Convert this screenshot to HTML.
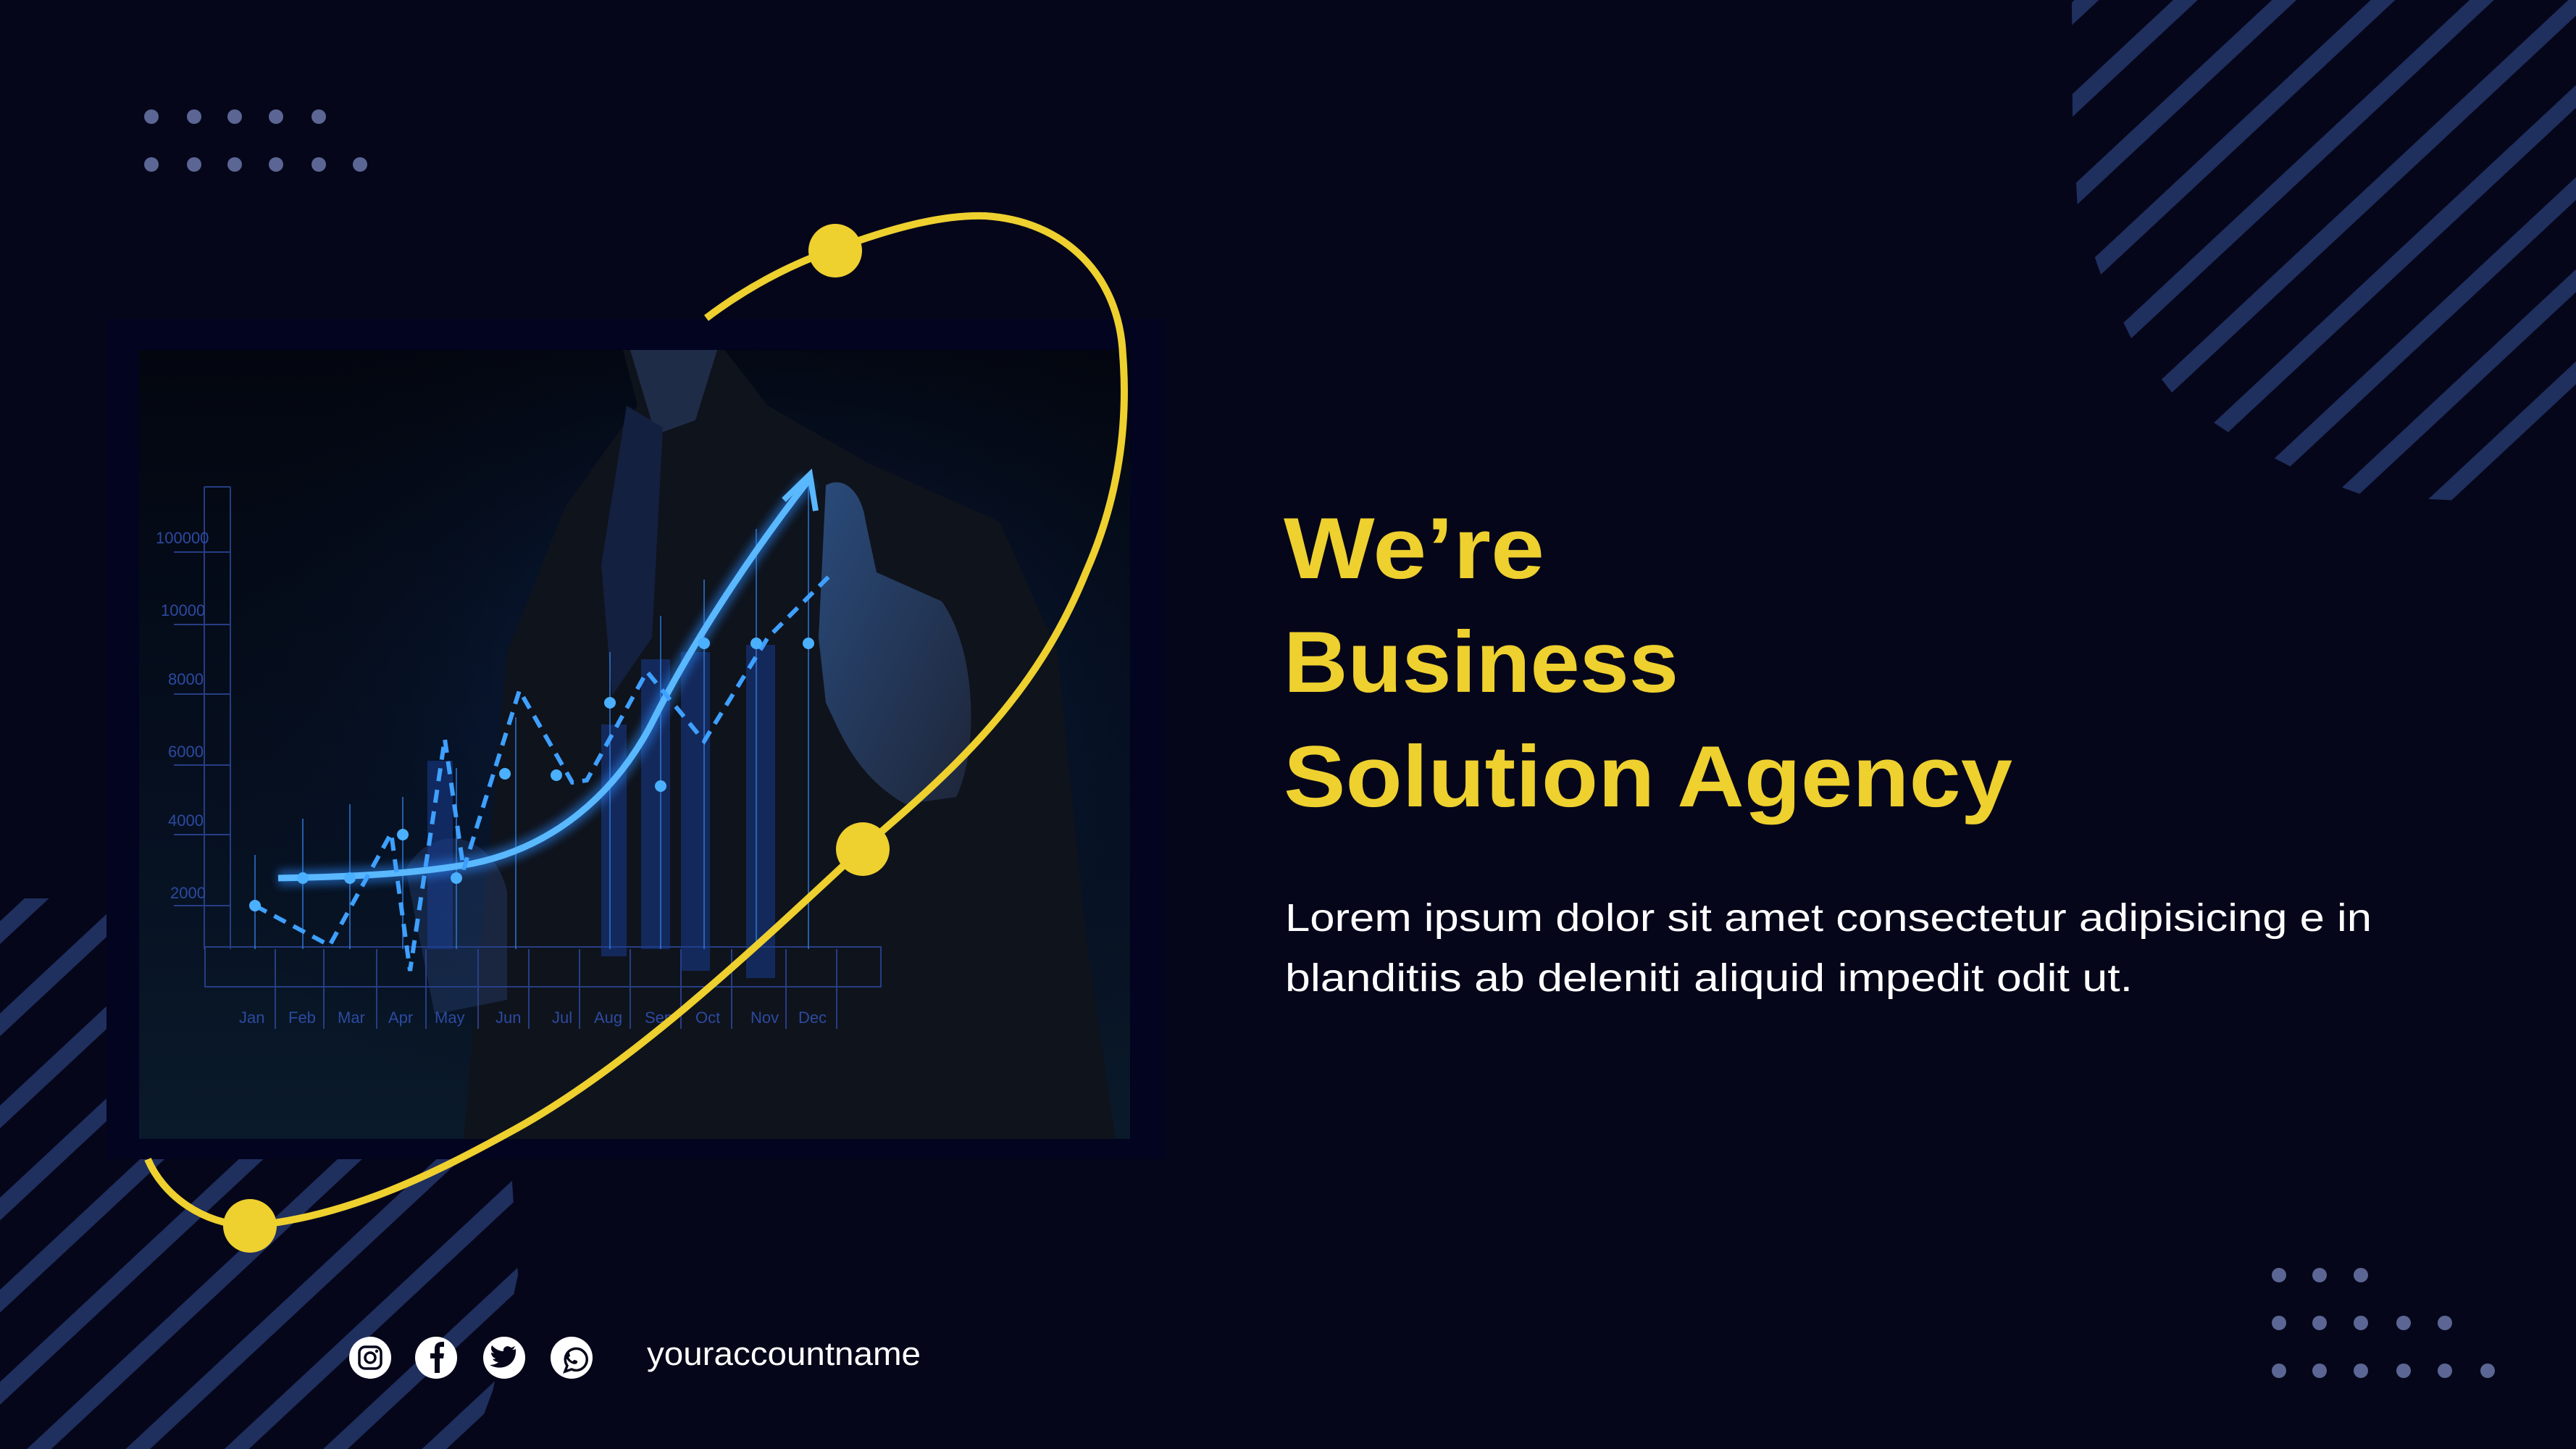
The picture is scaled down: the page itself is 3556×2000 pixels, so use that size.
<!DOCTYPE html>
<html><head><meta charset="utf-8"><style>
html,body{margin:0;padding:0;background:#06061a;}
svg{display:block}
</style></head><body>
<svg width="3556" height="2000" viewBox="0 0 3556 2000" xmlns="http://www.w3.org/2000/svg">
<defs>
<pattern id="st" width="93" height="93" patternUnits="userSpaceOnUse" patternTransform="rotate(47)">
<rect x="0" y="0" width="23" height="93" fill="#1f2f5e"/>
</pattern>
<clipPath id="tr"><polygon points="2860,0 2861,164 2868,288 2904,390 2946,475 3003,548 3093,608 3183,655 3267,685 3420,692 3556,610 3556,0"/></clipPath>
<clipPath id="bl"><polygon points="0,1240 400,1240 705,1600 715,1760 680,1920 650,2000 0,2000"/></clipPath>
<radialGradient id="glow" cx="0.62" cy="0.45" r="0.6">
<stop offset="0" stop-color="#0d2a5a" stop-opacity="0.8"/>
<stop offset="1" stop-color="#050914" stop-opacity="0"/>
</radialGradient>
<linearGradient id="photo" x1="0" y1="0" x2="0" y2="1">
<stop offset="0" stop-color="#03060f"/>
<stop offset="0.6" stop-color="#061021"/>
<stop offset="1" stop-color="#0a1a2a"/>
</linearGradient>
<linearGradient id="hand" x1="0" y1="0" x2="1" y2="1">
<stop offset="0" stop-color="#3f78c8"/>
<stop offset="1" stop-color="#2a3550"/>
</linearGradient>
<filter id="bl1"><feGaussianBlur stdDeviation="6"/></filter>
</defs>
<rect width="3556" height="2000" fill="#06061a"/>
<rect x="2800" y="0" width="756" height="720" fill="url(#st)" clip-path="url(#tr)"/>
<rect x="0" y="1200" width="760" height="800" fill="url(#st)" clip-path="url(#bl)"/>

<g fill="#5b6694">
<circle cx="209" cy="161" r="10"/><circle cx="268" cy="161" r="10"/><circle cx="324" cy="161" r="10"/><circle cx="381" cy="161" r="10"/><circle cx="440" cy="161" r="10"/>
<circle cx="209" cy="227" r="10"/><circle cx="268" cy="227" r="10"/><circle cx="324" cy="227" r="10"/><circle cx="381" cy="227" r="10"/><circle cx="440" cy="227" r="10"/><circle cx="497" cy="227" r="10"/>
<circle cx="3146" cy="1760" r="10"/><circle cx="3202" cy="1760" r="10"/><circle cx="3259" cy="1760" r="10"/>
<circle cx="3146" cy="1826" r="10"/><circle cx="3202" cy="1826" r="10"/><circle cx="3259" cy="1826" r="10"/><circle cx="3318" cy="1826" r="10"/><circle cx="3375" cy="1826" r="10"/>
<circle cx="3146" cy="1892" r="10"/><circle cx="3202" cy="1892" r="10"/><circle cx="3259" cy="1892" r="10"/><circle cx="3318" cy="1892" r="10"/><circle cx="3375" cy="1892" r="10"/><circle cx="3434" cy="1892" r="10"/>
</g>

<rect x="147" y="440" width="1463" height="1160" fill="#020420"/>
<rect x="192" y="483" width="1368" height="1089" fill="url(#photo)"/>
<rect x="192" y="483" width="1368" height="1089" fill="url(#glow)"/>
<path d="M640,1572 L700,900 L780,700 L880,560 L860,483 L1000,483 L1060,560 L1200,640 L1380,720 L1460,900 L1500,1300 L1540,1572 Z" fill="#0f131c"/>
<path d="M870,483 L990,483 L960,580 L905,600 Z" fill="#1f2c48"/>
<path d="M865,560 L915,590 L900,880 L845,960 L830,780 Z" fill="#142040"/>
<path d="M1140,670 C1165,655 1190,680 1195,720 L1210,790 L1300,830 C1350,900 1350,1040 1320,1100 L1250,1110 C1180,1070 1160,1010 1140,970 L1130,880 Z" fill="url(#hand)" opacity="0.55"/>
<path d="M560,1200 C600,1130 680,1150 700,1230 L700,1380 L600,1400 Z" fill="#3d5fa8" opacity="0.25"/>
<g stroke="#2a4390" stroke-width="2" fill="none" opacity="0.9">
<line x1="282" y1="672" x2="282" y2="1310"/><line x1="318" y1="672" x2="318" y2="1310"/><line x1="282" y1="672" x2="318" y2="672"/>
<line x1="240" y1="762" x2="318" y2="762"/><line x1="240" y1="862" x2="318" y2="862"/><line x1="240" y1="958" x2="318" y2="958"/><line x1="240" y1="1056" x2="318" y2="1056"/><line x1="240" y1="1152" x2="318" y2="1152"/><line x1="240" y1="1250" x2="318" y2="1250"/>
<rect x="283" y="1307" width="933" height="55"/>
<line x1="380" y1="1310" x2="380" y2="1420"/><line x1="447" y1="1310" x2="447" y2="1420"/><line x1="520" y1="1310" x2="520" y2="1420"/><line x1="588" y1="1310" x2="588" y2="1420"/><line x1="660" y1="1310" x2="660" y2="1420"/><line x1="730" y1="1310" x2="730" y2="1420"/><line x1="800" y1="1310" x2="800" y2="1420"/><line x1="870" y1="1310" x2="870" y2="1420"/><line x1="940" y1="1310" x2="940" y2="1420"/><line x1="1010" y1="1310" x2="1010" y2="1420"/><line x1="1085" y1="1310" x2="1085" y2="1420"/><line x1="1155" y1="1310" x2="1155" y2="1420"/>
</g>
<g fill="#2c4aa0" font-family="Liberation Sans, sans-serif" font-size="22">
<text x="215" y="750">100000</text><text x="222" y="850">10000</text><text x="232" y="945">8000</text><text x="232" y="1045">6000</text><text x="232" y="1140">4000</text><text x="235" y="1240">2000</text>
<text x="330" y="1412">Jan</text><text x="398" y="1412">Feb</text><text x="466" y="1412">Mar</text><text x="536" y="1412">Apr</text><text x="600" y="1412">May</text><text x="684" y="1412">Jun</text><text x="762" y="1412">Jul</text><text x="820" y="1412">Aug</text><text x="890" y="1412">Sep</text><text x="960" y="1412">Oct</text><text x="1036" y="1412">Nov</text><text x="1102" y="1412">Dec</text>
</g>
<g fill="#1a3f9a" opacity="0.5">
<rect x="885" y="910" width="40" height="400"/><rect x="940" y="900" width="40" height="440"/><rect x="1030" y="890" width="40" height="460"/><rect x="830" y="1000" width="35" height="320"/><rect x="590" y="1050" width="35" height="260"/>
</g>
<g stroke="#2f7fe0" stroke-width="2" fill="none" opacity="0.7">
<line x1="352" y1="1180" x2="352" y2="1310"/><line x1="418" y1="1130" x2="418" y2="1310"/><line x1="483" y1="1110" x2="483" y2="1310"/><line x1="556" y1="1100" x2="556" y2="1310"/><line x1="630" y1="1060" x2="630" y2="1310"/><line x1="712" y1="990" x2="712" y2="1310"/><line x1="842" y1="900" x2="842" y2="1310"/><line x1="912" y1="850" x2="912" y2="1310"/><line x1="972" y1="800" x2="972" y2="1310"/><line x1="1044" y1="730" x2="1044" y2="1310"/><line x1="1116" y1="660" x2="1116" y2="1310"/>
</g>
<path d="M384,1212 C500,1210 580,1205 652,1192 C760,1170 850,1100 905,988 C960,880 1040,760 1116,663" stroke="#2b8cff" stroke-width="22" fill="none" opacity="0.5" filter="url(#bl1)"/>
<path d="M384,1212 C500,1210 580,1205 652,1192 C760,1170 850,1100 905,988 C960,880 1040,760 1116,663" stroke="#5ab8ff" stroke-width="9" fill="none"/>
<path d="M1082,690 L1118,655 L1126,705" stroke="#5ab8ff" stroke-width="8" fill="none"/>
<path d="M352,1250 L455,1305 L540,1150 L566,1340 L614,1020 L640,1200 L717,953 L790,1080 L810,1077 L893,927 L972,1023 L1060,880 L1150,790" stroke="#3ea0ff" stroke-width="6" stroke-dasharray="18 12" fill="none"/>
<g fill="#4ab0ff">
<circle cx="352" cy="1250" r="8"/><circle cx="418" cy="1212" r="8"/><circle cx="483" cy="1212" r="8"/><circle cx="556" cy="1152" r="8"/><circle cx="630" cy="1212" r="8"/><circle cx="697" cy="1068" r="8"/><circle cx="768" cy="1070" r="8"/><circle cx="842" cy="970" r="8"/><circle cx="912" cy="1085" r="8"/><circle cx="972" cy="888" r="8"/><circle cx="1044" cy="888" r="8"/><circle cx="1116" cy="888" r="8"/>
</g>

<path d="M975,439 C1040,390 1100,362 1152,344 C1230,315 1300,296 1360,298 C1470,305 1545,380 1550,490 C1560,620 1530,720 1499,790 C1430,960 1320,1060 1191,1170 C1030,1320 870,1470 714,1557 C600,1620 480,1680 345,1692 C280,1690 225,1650 204,1600" stroke="#eed02f" stroke-width="10" fill="none"/>
<g fill="#eed02f"><circle cx="1153" cy="346" r="37"/><circle cx="1191" cy="1172" r="37"/><circle cx="345" cy="1692" r="37"/></g>

<g font-family="Liberation Sans, sans-serif" font-weight="bold" fill="#eed02f" font-size="120">
<text x="1772" y="798" textLength="360" lengthAdjust="spacingAndGlyphs">We’re</text>
<text x="1772" y="955" textLength="545" lengthAdjust="spacingAndGlyphs">Business</text>
<text x="1772" y="1113" textLength="1006" lengthAdjust="spacingAndGlyphs">Solution Agency</text>
</g>
<g font-family="Liberation Sans, sans-serif" fill="#ffffff" font-size="54">
<text x="1774" y="1285" textLength="1500" lengthAdjust="spacingAndGlyphs">Lorem ipsum dolor sit amet consectetur adipisicing e in</text>
<text x="1774" y="1368" textLength="1170" lengthAdjust="spacingAndGlyphs">blanditiis ab deleniti aliquid impedit odit ut.</text>
</g>

<g fill="#ffffff"><circle cx="511" cy="1874" r="29"/><circle cx="602" cy="1874" r="29"/><circle cx="696" cy="1874" r="29"/><circle cx="789" cy="1874" r="29"/></g>
<g stroke="#06061a" fill="none" stroke-width="3.5">
<rect x="496" y="1859" width="30" height="30" rx="8"/><circle cx="511" cy="1874" r="7"/>
<path d="M780,1893 l3,-8 a15,15 0 1,1 6,5 z"/>
</g>
<circle cx="520" cy="1865" r="2.2" fill="#06061a"/>
<path d="M600,1895 L600,1875 L594,1875 L594,1868 L600,1868 L600,1862 C600,1855 604,1852 611,1852 L613,1852 L613,1859 L609,1859 C607,1859 607,1860 607,1862 L607,1868 L613,1868 L612,1875 L607,1875 L607,1895 Z" fill="#06061a"/>
<path d="M712,1862 c-2,1 -4,1 -5,1 c2,-1 3,-3 4,-5 c-2,1 -4,2 -6,2 c-4,-4 -11,-1 -10,5 c-7,0 -12,-4 -16,-8 c-2,4 -1,8 3,11 c-1,0 -3,-1 -4,-1 c0,4 3,7 6,8 c-1,1 -3,1 -4,0 c1,3 4,5 8,5 c-3,3 -8,4 -12,4 c16,9 36,1 36,-19 z" fill="#06061a"/>
<path d="M783,1868 c1,-2 3,-2 3,0 l1,3 c0,1 -1,2 -2,2 c1,3 3,5 6,6 c0,-1 1,-2 2,-2 l3,1 c2,1 1,3 0,4 c-3,2 -8,0 -12,-4 c-3,-3 -4,-8 -1,-10 z" fill="#06061a"/>
<text x="893" y="1884" font-family="Liberation Sans, sans-serif" font-size="45" fill="#ffffff" textLength="378" lengthAdjust="spacingAndGlyphs">youraccountname</text>
</svg>
</body></html>
